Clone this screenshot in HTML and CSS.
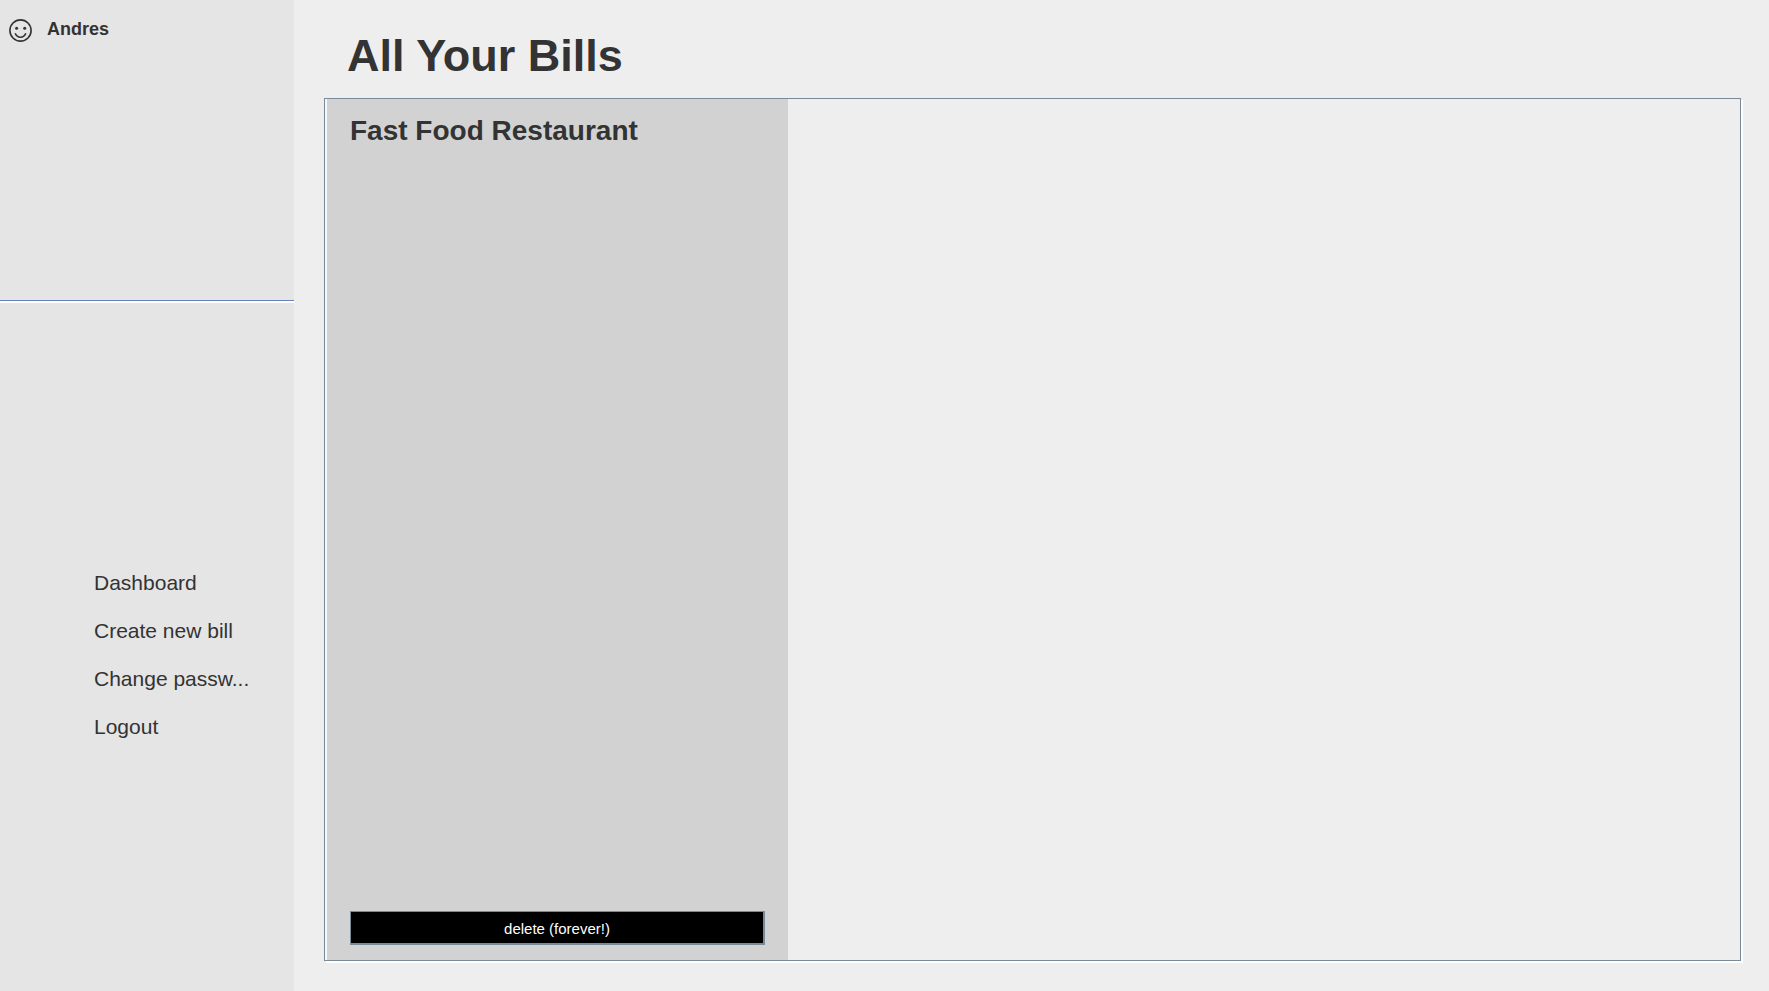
FILE: index.html
```html
<!DOCTYPE html>
<html lang="en">
<head>
<meta charset="utf-8">
<title>All Your Bills</title>
<link rel="stylesheet" href="styles.css">
</head>
<body>
<div class="app">
  <aside class="sidebar">
    <div class="user">
      <svg class="user-icon" width="23" height="23" viewBox="0 0 23 23" aria-hidden="true">
        <circle cx="11.5" cy="11.5" r="10.6"/>
        <path d="M6.2 14.3Q7.7 18.2 11.5 18.2T16.8 14.3"/>
        <circle class="eye" cx="7.6" cy="9.3" r="1.5"/>
        <circle class="eye" cx="15.7" cy="9.3" r="1.5"/>
      </svg>
      <span class="user-name">Andres</span>
    </div>
    <nav class="menu">
      <button class="menu-item" type="button">Dashboard</button>
      <button class="menu-item" type="button">Create new bill</button>
      <button class="menu-item" type="button">Change passw...</button>
      <button class="menu-item" type="button">Logout</button>
    </nav>
  </aside>
  <main class="content">
    <h1 class="title">All Your Bills</h1>
    <section class="bills">
      <article class="bill">
        <h2 class="bill-name">Fast Food Restaurant</h2>
        <button class="delete" type="button">delete (forever!)</button>
      </article>
    </section>
  </main>
</div>
</body>
</html>
```

FILE: styles.css
```css
* {
  box-sizing: border-box;
}

body {
  margin: 0;
  background: #eeeeee;
  color: #333333;
  font-family: "Liberation Sans", Arial, sans-serif;
}

.app {
  display: grid;
  grid-template-columns: 294px 1fr;
  min-height: 100vh;
}

.sidebar {
  display: flex;
  flex-direction: column;
  background: #e5e5e5;
}

.user {
  display: flex;
  align-items: flex-start;
  gap: 15px;
  height: 301px;
  padding: 19px 9px;
  border-bottom: 1px solid #6382bf;
  box-shadow: 0 2px 0 #ffffff;
}

.user-icon {
  fill: none;
  stroke: #333333;
  stroke-width: 1.6;
}

.user-icon .eye {
  fill: #333333;
  stroke: none;
}

.user-name {
  font-size: 18px;
  font-weight: bold;
  line-height: 20px;
}

.menu {
  display: flex;
  flex: 1;
  flex-direction: column;
  justify-content: center;
  padding: 18px 24px 0 94px;
}

.menu-item {
  height: 48px;
  padding: 0;
  border: 0;
  background: none;
  color: inherit;
  font: inherit;
  font-size: 21px;
  text-align: left;
  white-space: nowrap;
  cursor: pointer;
}

.content {
  display: flex;
  flex-direction: column;
  padding: 29px 28px 30px 30px;
}

.title {
  margin: 0 0 15px;
  padding-left: 23px;
  font-size: 45px;
  line-height: 54px;
}

.bills {
  display: flex;
  flex: 1;
  padding-left: 2px;
  border: 1px solid #7a8a99;
  box-shadow: 2px 2px 0 #ffffff, inset 2px 0 0 #f7f7f7;
}

.bill {
  display: flex;
  flex-direction: column;
  justify-content: space-between;
  width: 461px;
  padding: 16px 23px 15px;
  background: #d2d2d2;
}

.bill-name {
  margin: 0;
  font-size: 28px;
  line-height: 32px;
}

.delete {
  height: 34px;
  padding: 2px 0 0;
  border: solid #7a8a99;
  border-width: 1px 2px 2px 1px;
  background: #000000;
  color: #ffffff;
  font: inherit;
  font-size: 15px;
  cursor: pointer;
}
```
